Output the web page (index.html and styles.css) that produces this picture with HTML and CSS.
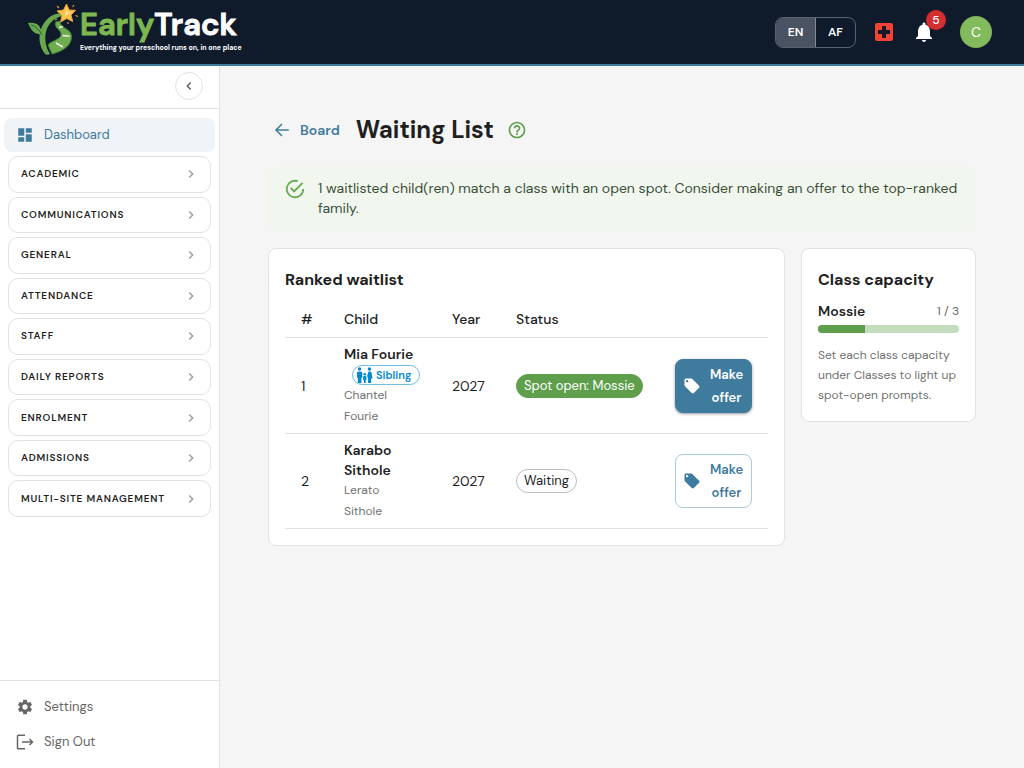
FILE: index.html
```html
<!DOCTYPE html>
<html lang="en">
<head>
<meta charset="utf-8">
<meta name="viewport" content="width=device-width, initial-scale=1">
<title>Waiting List - EarlyTrack</title>
<link rel="stylesheet" href="styles.css">
</head>
<body>
<svg class="sprite" aria-hidden="true">
  <symbol id="chevron" viewBox="0 0 24 24"><path d="M10 6 8.59 7.41 13.17 12l-4.58 4.59L10 18l6-6z"/></symbol>
  <symbol id="tag" viewBox="0 0 24 24"><path d="m21.41 11.58-9-9C12.05 2.22 11.55 2 11 2H4c-1.1 0-2 .9-2 2v7c0 .55.22 1.05.59 1.42l9 9c.36.36.86.58 1.41.58s1.05-.22 1.41-.59l7-7c.37-.36.59-.86.59-1.41s-.23-1.06-.59-1.42M5.500 7C4.670 7 4 6.330 4 5.500S4.670 4 5.500 4 7 4.670 7 5.500 6.330 7 5.500 7"/></symbol>
</svg>
<header class="topbar">
  <a class="brand" href="#">
    <svg class="brand-mark" viewBox="0 0 50 54" aria-hidden="true">
      <path d="M17 49C11 41 10 31 13.500 23 17 14 24 8.500 34 8l1 3C27 12 21 18 18.500 25c-2.500 8-1 17 3.500 24q-2.500 1.500-5 0Z" fill="#68a74e"/>
      <path d="M14 29C6 30 3 25 0 18c8-1.500 13 2 14 11Z" fill="#68a74e"/>
      <path d="M3 20q7 2 11 10" fill="none" stroke="#2c5a30"/>
      <path d="M27.500 17C26 24 34 25 33 30c-1 5-11 6-13 10l4 9C36 46 44 40 43.500 31 43 23 32 24 32 16Z" fill="#6fac4f" stroke="#3d7a3b"/>
      <path d="M34.500 30.500l7 .8M28 38l7 4M31 22.500l4-1" fill="none" stroke="#e9f1df" stroke-width="1.500"/>
      <path d="m38.500-1 2.700 6 6.300.3-4.500 4.700 1.700 6.500-6-3-6 3.500 1.300-6.700-5-4.300 6.500-1Z" fill="#ffc24b" stroke="#e9a23a" stroke-linejoin="round"/>
      <path d="m38 2 1.500 5 4 .5-3.500 2-3 1.500.5-4Z" fill="#ffe08a"/>
      <path d="m29 1 2 2M46 0l-1.500 2M47.500 10.500l2.500 1M29 14l-2 1M40 17v2" stroke="#d79838" stroke-width="1.200"/>
    </svg>
    <span class="brand-text">
      <span class="brand-name"><span class="brand-early">Early</span>Track</span>
      <span class="brand-tag">Everything your preschool runs on, in one place</span>
    </span>
  </a>
  <div class="tools">
    <div class="lang" role="group" aria-label="Language"><button class="lang-btn lang-on" type="button">EN</button><button class="lang-btn" type="button">AF</button></div>
    <button class="icon-btn emergency" type="button" aria-label="Emergency"><svg class="i24" viewBox="0 0 24 24"><path d="M19 3H5c-1.100 0-2 .9-2 2v14c0 1.100.9 2 2 2h14c1.100 0 2-.9 2-2V5c0-1.100-.9-2-2-2m-1 11h-4v4h-4v-4H6v-4h4V6h4v4h4z"/></svg></button>
    <button class="icon-btn" type="button" aria-label="Notifications, 5 unread"><svg class="i24" viewBox="0 0 24 24"><path d="M12 22c1.100 0 2-.9 2-2h-4c0 1.100.89 2 2 2m6-6v-5c0-3.070-1.640-5.640-4.500-6.320V4c0-.83-.67-1.500-1.500-1.500s-1.500.67-1.500 1.500v.68C7.630 5.360 6 7.920 6 11v5l-2 2v1h16v-1z"/></svg><span class="badge">5</span></button>
    <button class="avatar" type="button" aria-label="Account">C</button>
  </div>
</header>
<div class="shell">
  <aside class="sidebar">
    <div class="side-top"><button class="collapse" type="button" aria-label="Collapse menu"><svg class="i16 flip" viewBox="0 0 24 24"><use href="#chevron"/></svg></button></div>
    <nav class="nav">
      <a class="nav-link nav-active" href="#"><svg class="i18" viewBox="0 0 24 24"><path d="M3 13h8V3H3zm0 8h8v-6H3zm10 0h8V11h-8zm0-18v6h8V3z"/></svg>Dashboard</a>
      <div class="groups">
        <button class="group" type="button">ACADEMIC<svg class="i16" viewBox="0 0 24 24"><use href="#chevron"/></svg></button>
        <button class="group" type="button">COMMUNICATIONS<svg class="i16" viewBox="0 0 24 24"><use href="#chevron"/></svg></button>
        <button class="group" type="button">GENERAL<svg class="i16" viewBox="0 0 24 24"><use href="#chevron"/></svg></button>
        <button class="group" type="button">ATTENDANCE<svg class="i16" viewBox="0 0 24 24"><use href="#chevron"/></svg></button>
        <button class="group" type="button">STAFF<svg class="i16" viewBox="0 0 24 24"><use href="#chevron"/></svg></button>
        <button class="group" type="button">DAILY REPORTS<svg class="i16" viewBox="0 0 24 24"><use href="#chevron"/></svg></button>
        <button class="group" type="button">ENROLMENT<svg class="i16" viewBox="0 0 24 24"><use href="#chevron"/></svg></button>
        <button class="group" type="button">ADMISSIONS<svg class="i16" viewBox="0 0 24 24"><use href="#chevron"/></svg></button>
        <button class="group" type="button">MULTI-SITE MANAGEMENT<svg class="i16" viewBox="0 0 24 24"><use href="#chevron"/></svg></button>
      </div>
    </nav>
    <div class="side-foot">
      <a class="nav-link" href="#"><svg class="i18" viewBox="0 0 24 24"><path d="M19.140 12.940c.04-.3.060-.61.060-.94 0-.32-.02-.64-.07-.94l2.030-1.580c.18-.14.23-.41.12-.61l-1.920-3.320c-.12-.22-.37-.29-.59-.22l-2.390.96c-.5-.38-1.030-.7-1.620-.94l-.36-2.540c-.04-.24-.24-.41-.48-.41h-3.840c-.24 0-.43.17-.47.41l-.36 2.540c-.59.24-1.130.57-1.620.94l-2.390-.96c-.22-.08-.47 0-.59.22L2.740 8.870c-.12.21-.08.47.12.61l2.030 1.580c-.05.3-.09.63-.09.94s.02.64.07.94l-2.030 1.580c-.18.14-.23.41-.12.61l1.920 3.320c.12.22.37.29.59.22l2.390-.96c.5.38 1.030.7 1.620.94l.36 2.540c.05.24.24.41.48.41h3.840c.24 0 .44-.17.47-.41l.36-2.540c.59-.24 1.130-.56 1.620-.94l2.390.96c.22.08.47 0 .59-.22l1.920-3.320c.12-.22.07-.47-.12-.61zM12 15.600c-1.980 0-3.600-1.620-3.600-3.600s1.620-3.600 3.600-3.600 3.600 1.620 3.600 3.600-1.620 3.600-3.600 3.600"/></svg>Settings</a>
      <a class="nav-link" href="#"><svg class="i18" viewBox="0 0 24 24"><path class="line" d="M12 3H3Q2 3 2 4v16q0 1 1 1h9M8 12h14M18 8l4 4-4 4"/></svg>Sign Out</a>
    </div>
  </aside>
  <main class="main">
    <div class="title-row">
      <a class="back" href="#"><svg class="i18" viewBox="0 0 24 24"><path class="line" d="M21 12H4M12 4l-8 8 8 8"/></svg>Board</a>
      <h1 class="title">Waiting List</h1>
      <button class="help" type="button" aria-label="Help"><svg class="i20" viewBox="0 0 24 24"><path d="M11 18h2v-2h-2zm1-16C6.480 2 2 6.480 2 12s4.480 10 10 10 10-4.480 10-10S17.520 2 12 2m0 18c-4.410 0-8-3.590-8-8s3.590-8 8-8 8 3.590 8 8-3.590 8-8 8m0-14c-2.210 0-4 1.790-4 4h2c0-1.100.9-2 2-2s2 .9 2 2c0 2-3 1.750-3 5h2c0-2.250 3-2.500 3-5 0-2.210-1.790-4-4-4"/></svg></button>
    </div>
    <div class="alert" role="status">
      <svg class="i22" viewBox="0 0 24 24"><path d="M20 12a8 8 0 1 1-5.800-7.690l1.570-1.570A10 10 0 1 0 22 12zM7.910 10.080 6.500 11.500 11 16 21 6l-1.410-1.420L11 13.170z"/></svg>
      <p class="alert-text">1 waitlisted child(ren) match a class with an open spot. Consider making an offer to the top-ranked family.</p>
    </div>
    <div class="columns">
      <section class="card">
        <h2 class="card-title">Ranked waitlist</h2>
        <table class="table">
          <colgroup><col class="c-rank"><col class="c-child"><col class="c-year"><col class="c-status"><col class="c-act"></colgroup>
          <thead><tr><th scope="col">#</th><th scope="col">Child</th><th scope="col">Year</th><th scope="col">Status</th><th scope="col" aria-label="Action"></th></tr></thead>
          <tbody>
            <tr>
              <td>1</td>
              <td><div class="name">Mia Fourie</div><span class="sibling"><svg class="family" viewBox="0 0 18 18" aria-hidden="true"><circle cx="3.500" cy="2.200" r="1.900"/><path d="M.5 7q0-2 2-2h2q2 0 2 2v5H5.500v6h-4v-6h-1Z"/><circle cx="14.500" cy="2.200" r="1.900"/><path d="M13.500 5h2q1 0 1.300 1L18 13h-1.500v5h-3.500v-5l-1-3Z"/><circle cx="9.300" cy="8.200" r="1.500"/><path d="M7.500 11q0-.8.8-.8h2q.8 0 .8.8v4h-.8v3H8.300v-3h-.8Z"/></svg>Sibling</span><div class="parent">Chantel<br>Fourie</div></td>
              <td>2027</td>
              <td><span class="chip chip-open">Spot open: Mossie</span></td>
              <td><button class="offer offer-main" type="button"><svg class="i18" viewBox="0 0 24 24"><use href="#tag"/></svg><span>Make offer</span></button></td>
            </tr>
            <tr>
              <td>2</td>
              <td><div class="name">Karabo Sithole</div><div class="parent">Lerato<br>Sithole</div></td>
              <td>2027</td>
              <td><span class="chip">Waiting</span></td>
              <td><button class="offer" type="button"><svg class="i18" viewBox="0 0 24 24"><use href="#tag"/></svg><span>Make offer</span></button></td>
            </tr>
          </tbody>
        </table>
      </section>
      <section class="card">
        <h2 class="card-title">Class capacity</h2>
        <div class="cap-row"><span class="cap-name">Mossie</span><span class="cap-count">1 / 3</span></div>
        <div class="bar" role="progressbar" aria-label="Mossie capacity" aria-valuenow="1" aria-valuemin="0" aria-valuemax="3"><div class="bar-fill" style="width:33.3%"></div></div>
        <p class="hint">Set each class capacity under Classes to light up spot-open prompts.</p>
      </section>
    </div>
  </main>
</div>
</body>
</html>
```

FILE: styles.css
```css
* { box-sizing: border-box; }
body { margin: 0; min-height: 100vh; display: flex; flex-direction: column; background: #f5f5f5; color: #1f1f1f; font: 400 14px/20px "DM Sans", Inter, "Liberation Sans", sans-serif; font-optical-sizing: none; }
a { color: inherit; text-decoration: none; }
button { margin: 0; padding: 0; border: 0; background: none; color: inherit; font: inherit; cursor: pointer; }
h1, h2, p { margin: 0; }
svg { display: block; flex: none; fill: currentColor; }
.sprite { position: absolute; width: 0; height: 0; }
.line { fill: none; stroke: currentColor; stroke-width: 2px; }
.i16 { width: 16px; height: 16px; }
.i18 { width: 18px; height: 18px; }
.i20 { width: 20px; height: 20px; }
.i22 { width: 22px; height: 22px; }
.i24 { width: 24px; height: 24px; }
.flip { transform: scaleX(-1); }

.topbar { display: flex; align-items: center; justify-content: space-between; height: 66px; padding: 0 32px 0 28px; border-bottom: 2px solid #3f7b9d; background: #0f1a2b; color: #fff; }
.brand { display: flex; align-items: center; gap: 2px; }
.brand-mark { width: 50px; height: 54px; overflow: visible; }
.brand-text { display: flex; flex-direction: column; padding-bottom: 3px; }
.brand-name { font-size: 31px; line-height: 34px; font-weight: 600; -webkit-text-stroke: 1px currentColor; }
.brand-early { color: #7cb74f; }
.brand-tag { font-size: 7px; line-height: 12px; font-weight: 700; }
.tools { display: flex; align-items: center; }
.lang { display: flex; margin-right: 8px; border: 1px solid #596270; border-radius: 8px; overflow: hidden; }
.lang-btn { width: 39px; height: 29px; font-size: 12px; font-weight: 600; }
.lang-on { width: 40px; border-right: 1px solid #828994; background: #4a5361; }
.icon-btn { position: relative; padding: 8px; }
.emergency { color: #f44336; }
.badge { position: absolute; top: -2px; right: -2px; width: 20px; height: 20px; border-radius: 10px; background: #d32f2f; font-size: 12px; font-weight: 500; text-align: center; }
.avatar { width: 32px; height: 32px; margin-left: 16px; border-radius: 50%; background: #82bb5c; font-size: 14px; }

.shell { display: flex; flex: 1; }
.sidebar { display: flex; flex-direction: column; flex: none; width: 220px; border-right: 1px solid #e2e2e2; background: #fff; }
.side-top { display: flex; justify-content: flex-end; padding: 6px 16px 8px; border-bottom: 1px solid #e2e2e2; }
.collapse { display: grid; place-items: center; width: 28px; height: 28px; border: 1px solid #e2e2e2; border-radius: 50%; color: #555; }
.nav { flex: 1; padding: 9px 4px; }
.nav-link { display: flex; align-items: center; gap: 10px; height: 35px; padding: 0 12px; border-radius: 8px; color: #666; font-size: 13px; }
.nav-active { height: 34px; background: #f0f4f7; color: #3f7b9d; }
.groups { display: grid; grid-auto-rows: 1fr; gap: 4px; min-height: 361px; padding: 0 4px; margin-top: 4px; }
.group { display: flex; align-items: center; justify-content: space-between; padding: 0 11px 0 12px; border: 1px solid #e2e2e2; border-radius: 10px; font-size: 10px; font-weight: 600; letter-spacing: 0.08em; }
.group svg { color: #999; }
.side-foot { padding: 8px 4px 9px; border-top: 1px solid #e2e2e2; }

.main { flex: 1; min-width: 0; padding: 48px; }
.title-row { display: flex; align-items: center; height: 32px; }
.back { display: flex; align-items: center; gap: 9px; margin: 0 16px 0 5px; color: #3f7b9d; font-weight: 600; }
.title { font-size: 24px; line-height: 32px; font-weight: 700; }
.help { margin-left: 13px; color: #5f9f4c; }
.alert { display: flex; gap: 12px; margin: 20px 0 16px; padding: 12px 16px 14px; border-radius: 8px; background: #f1f7ef; color: #3c4f37; }
.alert svg { color: #69ab58; }
.columns { display: grid; grid-template-columns: minmax(0, 1fr) 175px; align-items: start; gap: 16px; }
.card { padding: 16px; border: 1px solid #e2e2e2; border-radius: 8px; background: #fff; }
.card-title { font-size: 16px; line-height: 30px; font-weight: 700; }
.table { width: 100%; margin-top: 8px; border-collapse: collapse; table-layout: fixed; }
.c-rank { width: 43px; }
.c-child { width: 108px; }
.c-year { width: 64px; }
.c-act { width: 109px; }
.table th, .table td { padding: 6px 16px; border-bottom: 1px solid #e2e2e2; text-align: left; }
.table th { padding-top: 6px; padding-bottom: 8px; font-weight: 500; }
.table th:nth-child(3), .table td:nth-child(3) { padding-right: 0; }
.name { font-weight: 600; }
.parent { color: #707070; font-size: 12px; line-height: 21px; }
.sibling { display: flex; align-items: center; gap: 3px; width: 68px; height: 20px; margin: 1px 0 0 8px; padding: 0 3px; border: 1px solid #73bce8; border-radius: 10px; color: #0288d1; font-size: 11px; font-weight: 600; }
.family { width: 17px; height: 16px; }
.chip { display: inline-flex; align-items: center; height: 24px; padding: 0 7px; border: 1px solid #bdbdbd; border-radius: 12px; font-size: 13px; white-space: nowrap; }
.chip-open { border-color: #5f9f4c; background: #5f9f4c; color: #fff; }
.offer { display: flex; align-items: center; gap: 8px; width: 77px; padding: 3px 7px; border: 1px solid #adc8d6; border-radius: 8px; color: #3f7b9d; font-size: 13px; line-height: 23px; font-weight: 600; text-align: center; }
.offer-main { border-color: #3f7b9d; background: #3f7b9d; color: #fff; box-shadow: 0 1px 3px #0006; }
.cap-row { display: flex; align-items: center; justify-content: space-between; margin-top: 6px; }
.cap-name { font-weight: 600; }
.cap-count { color: #666; font-size: 12px; }
.bar { height: 8px; margin: 4px 0 12px; border-radius: 4px; background: #c2dcbc; overflow: hidden; }
.bar-fill { height: 100%; background: #5f9f4c; }
.hint { color: #707070; font-size: 12px; line-height: 20px; }
```
